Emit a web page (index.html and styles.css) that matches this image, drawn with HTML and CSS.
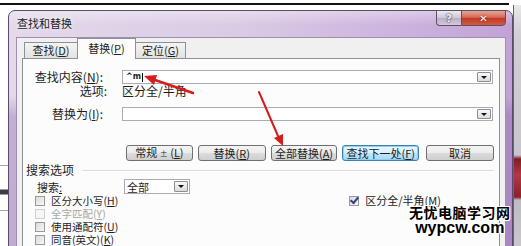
FILE: index.html
```html
<!DOCTYPE html>
<html lang="zh-CN">
<head>
    <meta charset="UTF-8">
    <title>查找和替换</title>
    <link rel="stylesheet" href="styles.css">
</head>
<body>
    <div class="desk">
        <div class="top-line"></div>
        <div class="behind-left">
            <span class="rule thin"></span>
            <span class="rule thick"></span>
            <span class="rule thin"></span>
        </div>
        <div class="behind-right"></div>

        <div class="dialog">
            <div class="titlebar">
                <span class="title">查找和替换</span>
                <div class="caption">
                    <span class="cap-help">?</span>
                    <span class="cap-close">✕</span>
                </div>
            </div>

            <div class="client">
                <div class="tabs">
                    <div class="tab tab-find">查找(<u>D</u>)</div>
                    <div class="tab tab-replace active">替换(<u>P</u>)</div>
                    <div class="tab tab-goto">定位(<u>G</u>)</div>
                </div>

                <div class="panel">
                    <div class="row">
                        <label class="lbl">查找内容(<u>N</u>):</label>
                        <div class="combo">
                            <span class="combo-text">^m<i class="caret"></i></span>
                            <span class="drop"></span>
                        </div>
                    </div>
                    <div class="row row-opt">
                        <span class="lbl lbl-opt">选项:</span>
                        <span>区分全/半角</span>
                    </div>
                    <div class="row row-repl">
                        <label class="lbl">替换为(<u>I</u>):</label>
                        <div class="combo">
                            <span class="combo-text"></span>
                            <span class="drop"></span>
                        </div>
                    </div>

                    <div class="buttons">
                        <button class="btn btn-more">常规 <small>±</small> (<u>L</u>)</button>
                        <button class="btn btn-one">替换(<u>R</u>)</button>
                        <button class="btn btn-all">全部替换(<u>A</u>)</button>
                        <button class="btn btn-next default">查找下一处(<u>F</u>)</button>
                        <button class="btn btn-cancel">取消</button>
                    </div>

                    <div class="group-title">搜索选项</div>
                    <div class="search-row">
                        <span class="search-lbl">搜索<u>:</u></span>
                        <div class="select">
                            <span>全部</span>
                            <span class="drop"></span>
                        </div>
                    </div>

                    <div class="checks">
                        <div class="check-row">
                            <span class="check"><i class="box"></i>区分大小写(<u>H</u>)</span>
                            <span class="check check-right"><i class="box ticked"></i>区分全/半角(<u>M</u>)</span>
                        </div>
                        <div class="check-row">
                            <span class="check disabled"><i class="box"></i>全字匹配(<u>Y</u>)</span>
                        </div>
                        <div class="check-row">
                            <span class="check"><i class="box"></i>使用通配符(<u>U</u>)</span>
                        </div>
                        <div class="check-row">
                            <span class="check"><i class="box"></i>同音(英文)(<u>K</u>)</span>
                        </div>
                    </div>
                </div>
            </div>
        </div>

        <!-- red arrows drawn over the screenshot -->
        <svg class="arrows" width="521" height="246" viewBox="0 0 521 246">
            <line x1="193" y1="93" x2="155" y2="80" stroke="#d61c1c" stroke-width="2.4" stroke-linecap="round"/>
            <polygon points="144,76 157,75 154,85" fill="#d61c1c"/>
            <line x1="259" y1="92" x2="278" y2="136" stroke="#d61c1c" stroke-width="2" stroke-linecap="round"/>
            <polygon points="283,146 283,134 274,138" fill="#d61c1c"/>
        </svg>

        <div class="watermark">
            <div class="wm-cn">无忧电脑学习网</div>
            <div class="wm-en">wypcw.com</div>
        </div>
    </div>
</body>
</html>
```

FILE: styles.css
```css
body {
    margin: 0;
    background: #ffffff;
    font-family: "Noto Sans CJK SC", "Noto Sans", sans-serif;
    font-size: 12px;
    color: #1e1e1e;
    overflow: hidden;
}
.desk {
    position: relative;
    width: 521px;
    height: 246px;
    padding: 10px 0 0 8px;
    box-sizing: border-box;
    overflow: hidden;
}
u {
    text-decoration: underline;
    text-underline-offset: 1px;
}

/* things behind the dialog */
.top-line {
    position: absolute;
    left: 0;
    top: 3px;
    width: 509px;
    height: 2px;
    background: #111;
}
.behind-left {
    position: absolute;
    left: 0;
    top: 160px;
    width: 8px;
    display: flex;
    flex-direction: column;
}
.rule {
    display: block;
    height: 1px;
    background: #a8a8a8;
}
.rule.thin:first-child {
    margin-top: 5px;
}
.rule.thick {
    height: 4px;
    margin-top: 24px;
    background: #3c3c44;
    box-shadow: 0 -1px 0 #9a9aa6, 0 1px 0 #9a9aa6;
}
.rule.thick + .rule {
    margin-top: 16px;
}
.behind-right {
    position: absolute;
    left: 513px;
    top: 5px;
    width: 8px;
    height: 241px;
    border-left: 1px solid #6b6470;
    background: linear-gradient(to bottom, #e8e8ea 0, #cfcfd4 30px, #c8c6cc 150px, #7e1c28 154px, #b23846 170px, #8a2030 192px, #bcbcc2 195px, #c8c8cc 100%);
}

/* dialog frame */
.dialog {
    width: 505px;
    height: 250px;
    box-sizing: border-box;
    border: 1px solid #5a4d6a;
    border-radius: 7px 7px 0 0;
    background:
        linear-gradient(to bottom, rgba(255,255,255,0.35) 0, rgba(255,255,255,0) 14px),
        linear-gradient(to bottom, rgba(110,70,150,0) 0, rgba(110,70,150,0) 85px, rgba(110,70,150,0.28) 105px, rgba(110,70,150,0.3) 100%),
        linear-gradient(90deg, #e3d9ea 0%, #dacbe5 45%, #ccb3de 78%, #c2a2d6 100%);
    display: flex;
    flex-direction: column;
}
.titlebar {
    height: 26px;
    display: flex;
    align-items: flex-start;
    padding-left: 8px;
    flex-shrink: 0;
}
.title {
    margin-top: 5px;
    font-size: 11px;
    line-height: 15px;
    color: #222;
    text-shadow: 0 0 4px rgba(255,255,255,0.9);
}
.caption {
    margin-left: auto;
    margin-right: 6px;
    display: flex;
    margin-top: -1px;
}
.cap-help, .cap-close {
    height: 16px;
    line-height: 16px;
    text-align: center;
    box-sizing: border-box;
    border: 1px solid #5c5068;
    font-family: "DejaVu Sans", sans-serif;
    font-weight: bold;
}
.cap-help {
    width: 25px;
    border-radius: 0 0 0 4px;
    border-right: none;
    background: linear-gradient(to bottom, #ece8f0 0, #cfc7d8 50%, #b8aec6 51%, #d2cadb 100%);
    color: #f4f4f8;
    font-size: 11px;
    text-shadow: 0 0 2px #3a3248, 0 0 1px #3a3248;
}
.cap-close {
    width: 45px;
    border-radius: 0 0 4px 0;
    background: linear-gradient(to bottom, #e9a593 0, #d66a58 45%, #c03a28 52%, #d25a40 100%);
    color: #ffffff;
    font-size: 10px;
    text-shadow: 0 0 2px #5a1010;
}

.client {
    flex: 1;
    margin: 0 6px 0 7px;
    border: 1px solid #9e8fb0;
    border-bottom: none;
    background: #f0f0f0;
    padding: 0 5px 0 5px;
    display: flex;
    flex-direction: column;
}

/* tabs */
.tabs {
    display: flex;
    align-items: flex-end;
    height: 20px;
    padding-left: 2px;
    position: relative;
    z-index: 1;
}
.tab {
    height: 16px;
    box-sizing: border-box;
    border: 1px solid #8e9098;
    border-bottom: none;
    background: linear-gradient(to bottom, #f4f4f4, #e2e2e2);
    text-align: center;
    font-size: 11px;
    line-height: 15px;
}
.tab-find {
    width: 53px;
    border-right: none;
}
.tab-replace {
    width: 59px;
}
.tab-goto {
    width: 50px;
    border-left: none;
}
.tab.active {
    height: 21px;
    margin-bottom: -1px;
    background: #fcfcfc;
    line-height: 19px;
}

.panel {
    flex: 1;
    background: #fcfcfc;
    border: 1px solid #8e9098;
    border-bottom: none;
    padding-top: 11px;
    display: flex;
    flex-direction: column;
}

/* find / replace rows */
.row {
    display: flex;
    align-items: center;
    height: 14px;
}
.lbl {
    width: 80px;
    padding-right: 19px;
    text-align: right;
    white-space: nowrap;
    line-height: 14px;
}
.row-opt {
    height: 13px;
}
.lbl-opt {
    width: 84px;
    padding-right: 15px;
}
.row-repl {
    margin-top: 10px;
}
.combo {
    width: 371px;
    height: 14px;
    box-sizing: border-box;
    border: 1px solid #a9acb4;
    background: #fff;
    display: flex;
    align-items: center;
    justify-content: space-between;
}
.combo-text {
    padding-left: 3px;
    font-family: "DejaVu Sans", sans-serif;
    font-size: 8px;
    font-weight: bold;
    line-height: 10px;
    display: flex;
    align-items: center;
}
.caret {
    display: inline-block;
    width: 1px;
    height: 9px;
    margin-left: 1px;
    background: #000;
}
.drop {
    width: 14px;
    height: 10px;
    margin-right: 1px;
    box-sizing: border-box;
    border: 1px solid #8c8c94;
    border-radius: 1px;
    background: linear-gradient(to bottom, #f8f8f8, #dcdcdc);
    display: flex;
    align-items: center;
    justify-content: center;
}
.drop::after {
    content: "";
    border-left: 3px solid transparent;
    border-right: 3px solid transparent;
    border-top: 3px solid #111;
}

/* button row */
.buttons {
    display: flex;
    margin-top: 24px;
    margin-left: 103px;
    height: 16px;
}
.btn {
    height: 16px;
    box-sizing: border-box;
    padding: 0;
    margin-right: 5px;
    border: 1px solid #707070;
    border-radius: 3px;
    background: linear-gradient(to bottom, #f4f4f4 0, #ebebeb 50%, #dcdcdc 51%, #cfcfcf 100%);
    font-family: "Noto Sans CJK SC", sans-serif;
    font-size: 11px;
    line-height: 13px;
    color: #1e1e1e;
}
.btn small {
    font-size: 8px;
}
.btn-more { width: 67px; }
.btn-one { width: 68px; }
.btn-all { width: 67px; }
.btn-next { width: 77px; }
.btn-cancel { width: 68px; margin-left: 2px; }
.btn.default {
    border-color: #3c7fb1;
    background: linear-gradient(to bottom, #eaf6fd 0, #d9f0fc 50%, #bee6fd 51%, #a7d9f5 100%);
    box-shadow: inset 0 0 0 1px #8fd0f0;
}

/* search options */
.group-title {
    margin-top: 2px;
    margin-left: 3px;
    height: 14px;
    line-height: 14px;
    display: flex;
    align-items: center;
}
.group-title::after {
    content: "";
    flex: 1;
    height: 1px;
    margin-left: 8px;
    margin-right: 5px;
    background: #dcdcdc;
    box-shadow: 0 1px 0 #ffffff;
}
.search-row {
    margin-top: 2px;
    display: flex;
    align-items: center;
    height: 15px;
}
.search-lbl {
    margin-left: 14px;
    width: 87px;
    font-size: 11px;
}
.select {
    width: 66px;
    height: 15px;
    box-sizing: border-box;
    border: 1px solid #a9acb4;
    background: #fff;
    display: flex;
    align-items: center;
    justify-content: space-between;
    padding-left: 2px;
    font-size: 11px;
}
.select .drop {
    height: 11px;
}

.checks {
    display: flex;
    flex-direction: column;
}
.check-row {
    height: 13px;
    display: flex;
    align-items: center;
}
.check {
    display: flex;
    align-items: center;
    margin-left: 12px;
    font-size: 10.5px;
    line-height: 13px;
}
.check.disabled {
    color: #a6a6a6;
}
.check-right {
    margin-left: auto;
    margin-right: 58px;
    font-size: 11px;
}
.box {
    width: 10px;
    height: 10px;
    box-sizing: border-box;
    border: 1px solid #9a9a9a;
    background: linear-gradient(135deg, #dcdcdc, #f6f6f6);
    margin-right: 6px;
    display: flex;
    align-items: center;
    justify-content: center;
}
.disabled .box {
    border-color: #cfcfcf;
    background: #f6f6f6;
}
.box.ticked::after {
    content: "";
    width: 3px;
    height: 6px;
    border-right: 2px solid #2a3f8a;
    border-bottom: 2px solid #2a3f8a;
    transform: rotate(40deg) translate(-1px, -1px);
}

/* overlays */
.arrows {
    position: absolute;
    left: 0;
    top: 0;
    pointer-events: none;
}
.watermark {
    position: absolute;
    left: 409px;
    top: 204px;
    text-align: center;
    font-weight: bold;
    color: #000;
    text-shadow: 1px 0 0 #fff, -1px 0 0 #fff, 0 1px 0 #fff, 0 -1px 0 #fff, 1px 1px 0 #fff, -1px -1px 0 #fff, 1px -1px 0 #fff, -1px 1px 0 #fff;
}
.wm-cn {
    font-size: 14px;
    line-height: 16px;
    letter-spacing: 0.5px;
}
.wm-en {
    font-family: "Liberation Sans", Arial, sans-serif;
    font-size: 16px;
    line-height: 15px;
}
```
